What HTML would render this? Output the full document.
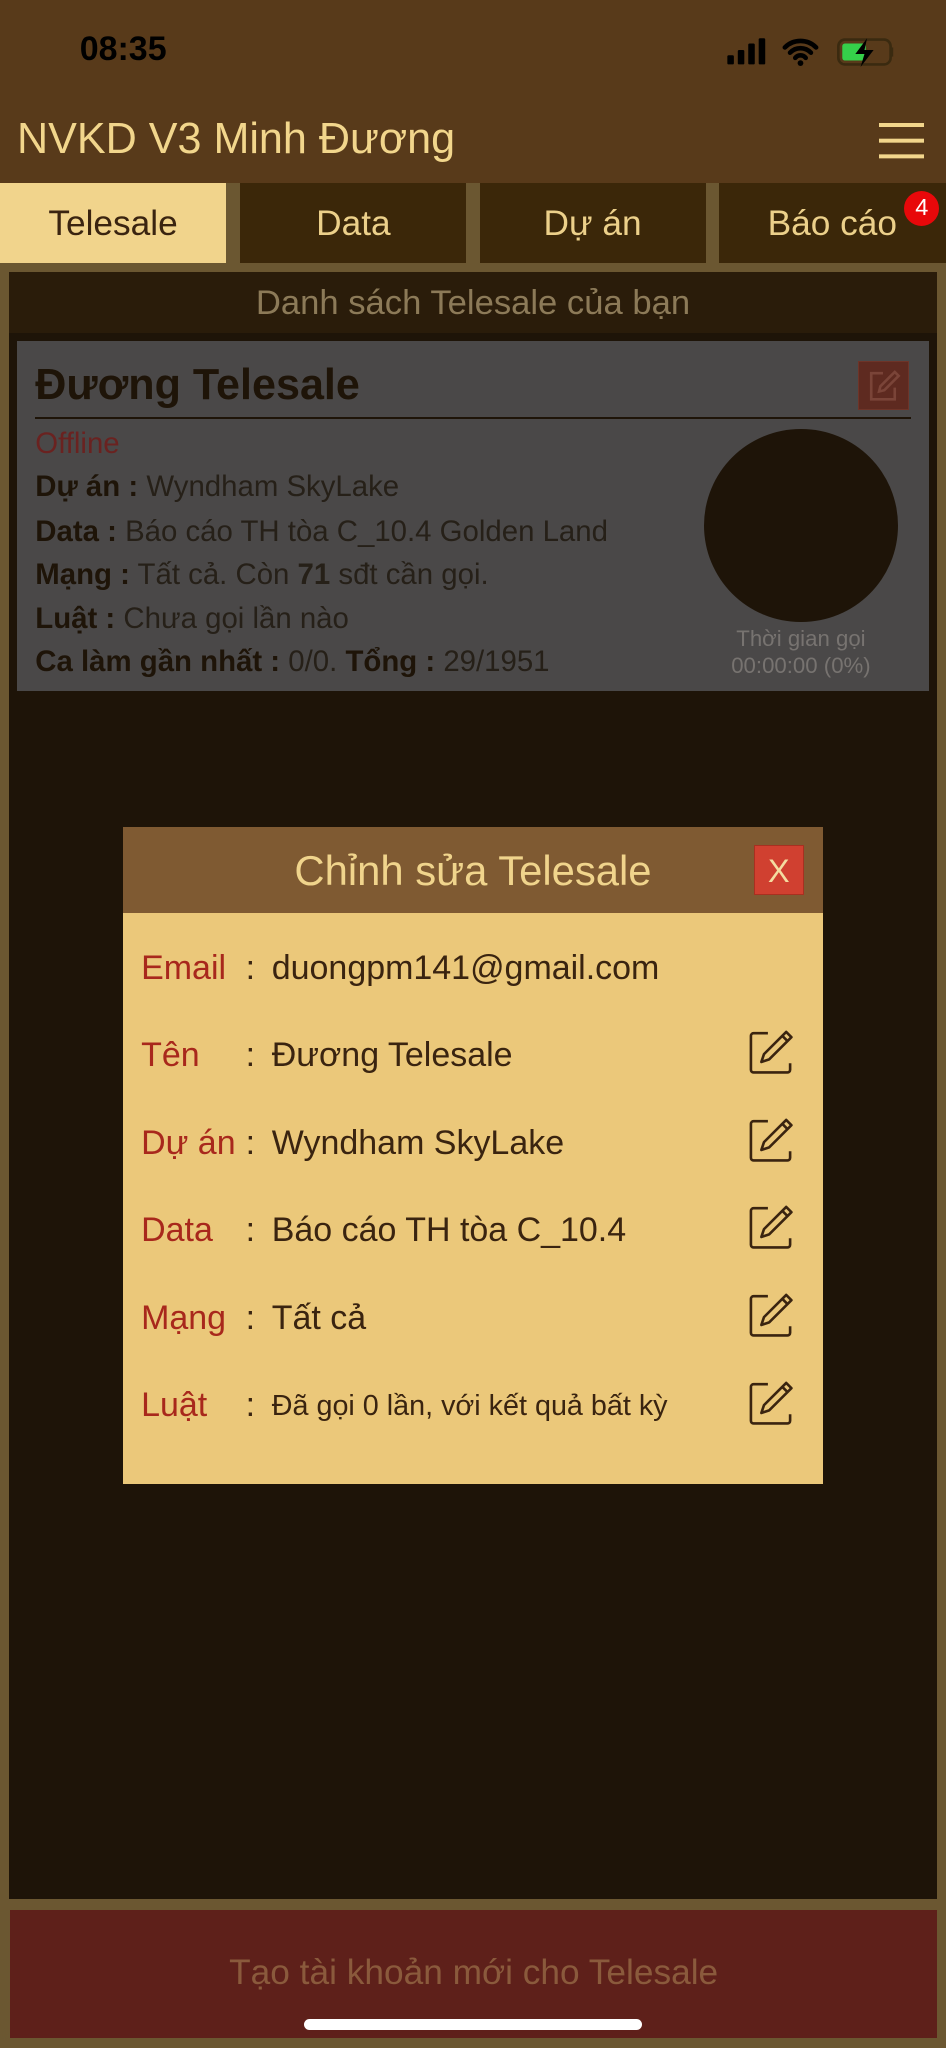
<!DOCTYPE html>
<html><head><meta charset="utf-8"><style>
*{margin:0;padding:0;box-sizing:border-box}
html,body{width:946px;height:2048px;overflow:hidden;background:#6b5731}
#w{zoom:1.30663;width:724px;height:1568px;position:relative;font-family:"Liberation Sans",sans-serif;background:#6b5731}
.a{position:absolute}
.tab{position:absolute;top:140px;height:61px;width:173px;background:#3b2709;color:#ecd08a;font-size:27px;text-align:center;line-height:62px}
.row{position:absolute;left:14px;font-size:26px;color:#3a2410;white-space:nowrap}
.row .l{position:absolute;left:0;color:#a8281c;white-space:nowrap}
.row .c{position:absolute;left:80px}
.row .v{position:absolute;left:100px;white-space:nowrap}
.ic{position:absolute;left:464px;top:-6px}
.ln{position:absolute;left:27px;font-size:22.5px;color:#1e1408;white-space:nowrap}
.ln b{font-weight:bold}
.ln span{color:#262018}
</style></head><body><div id="w">
<div class="a" style="left:0;top:0;width:724px;height:140px;background:#583a1a"></div>
<div class="a" style="left:61px;top:23px;font-size:26px;font-weight:bold;color:#000">08:35</div>
<svg class="a" style="left:556px;top:28px" width="130" height="24" viewBox="0 0 130 24">
<rect x="1" y="14" width="5" height="7" rx="1" fill="#000"/><rect x="9" y="10" width="5" height="11" rx="1" fill="#000"/><rect x="17" y="5" width="5" height="16" rx="1" fill="#000"/><rect x="25" y="1" width="5" height="20" rx="1" fill="#000"/>
<path d="M45 8a17 17 0 0 1 24 0M49 12a11 11 0 0 1 16 0M53 16a5 5 0 0 1 8 0" stroke="#000" stroke-width="3.5" fill="none" stroke-linecap="round"/><circle cx="57" cy="20" r="2.2" fill="#000"/>
<rect x="86" y="2" width="40" height="19" rx="5" fill="none" stroke="#3a2a10" stroke-width="2"/><rect x="89" y="5" width="18" height="13" rx="2" fill="#35d04a"/><path d="M127 8v7" stroke="#3a2a10" stroke-width="2"/><path d="M108 1l-9 12h7l-3 10 10-13h-7z" fill="#000"/>
</svg>
<div class="a" style="left:13px;top:88px;font-size:33px;color:#f2d68c">NVKD V3 Minh Đương</div>
<div class="a" style="left:673px;top:94px;width:34px;height:3px;background:#f2d68c;box-shadow:0 12px 0 #f2d68c,0 24px 0 #f2d68c"></div>
<div class="tab" style="left:0;background:#f1d48c;color:#3a2410">Telesale</div>
<div class="tab" style="left:184px">Data</div>
<div class="tab" style="left:367px">Dự án</div>
<div class="tab" style="left:550px;width:174px">Báo cáo</div>
<div class="a" style="left:692px;top:146px;width:27px;height:27px;border-radius:50%;background:#e8080a;color:#fff;font-size:18px;text-align:center;line-height:26px">4</div>
<div class="a" style="left:7px;top:208px;width:710px;height:1245px;background:#1e1408"></div>
<div class="a" style="left:7px;top:208px;width:710px;height:47px;background:#2a1c0a;color:#8c7a58;font-size:26.5px;text-align:center;line-height:48px">Danh sách Telesale của bạn</div>
<div class="a" style="left:13px;top:261px;width:698px;height:268px;background:#4a4848"></div>
<div class="a" style="left:27px;top:276px;font-size:33px;font-weight:bold;color:#1e1408">Đương Telesale</div>
<div class="a" style="left:657px;top:276px;width:39px;height:38px;background:#5e2a20;border:1px solid #6e3428"></div>
<svg class="a" style="left:663px;top:282px" width="28" height="28" viewBox="0 0 28 28" fill="none" stroke="#7a4438" stroke-width="2"><path d="M13 4H4v20h18v-9"/><path d="M22 3l3 3-11 11-4 1 1-4z"/></svg>
<div class="a" style="left:27px;top:319px;width:670px;height:2px;background:#1e1408"></div>
<div class="ln" style="top:327px;color:#6a2220">Offline</div>
<div class="ln" style="top:360px"><b>Dự án :</b> <span>Wyndham SkyLake</span></div>
<div class="ln" style="top:394px"><b>Data :</b> <span>Báo cáo TH tòa C_10.4 Golden Land</span></div>
<div class="ln" style="top:427px"><b>Mạng :</b> <span>Tất cả. Còn <b>71</b> sđt cần gọi.</span></div>
<div class="ln" style="top:461px"><b>Luật :</b> <span>Chưa gọi lần nào</span></div>
<div class="ln" style="top:494px"><b>Ca làm gần nhất :</b> <span>0/0.</span> <b>Tổng :</b> <span>29/1951</span></div>
<div class="a" style="left:539px;top:328px;width:148px;height:148px;border-radius:50%;background:#1e1408"></div>
<div class="a" style="left:533px;top:478px;width:160px;text-align:center;font-size:17px;color:#777370;line-height:21px">Thời gian gọi<br>00:00:00 (0%)</div>
<div class="a" style="left:94px;top:633px;width:536px;height:503px;background:#ebc87a"></div>
<div class="a" style="left:94px;top:633px;width:536px;height:66px;background:#7f5a32;color:#f0d48c;font-size:32px;text-align:center;line-height:68px">Chỉnh sửa Telesale</div>
<div class="a" style="left:577px;top:647px;width:38px;height:38px;background:#d04030;border:1px solid #a83020;color:#f4dca0;font-size:25px;text-align:center;line-height:38px">X</div>
<div class="a" style="left:94px;top:0;width:536px">
<div class="row" style="top:726px"><span class="l">Email</span><span class="c">:</span><span class="v">duongpm141@gmail.com</span></div>
<div class="row" style="top:793px"><span class="l">Tên</span><span class="c">:</span><span class="v">Đương Telesale</span><svg class="ic" width="36" height="36" viewBox="0 0 36 36" fill="none" stroke="#3a2410" stroke-width="2" stroke-linejoin="round"><path d="M16 4H5a2 2 0 0 0-2 2v26a2 2 0 0 0 2 2h26a2 2 0 0 0 2-2v-5"/><path d="M30 3l4 4-17 17-6 2 2-6z M27 6l4 4"/></svg></div>
<div class="row" style="top:860px"><span class="l">Dự án</span><span class="c">:</span><span class="v">Wyndham SkyLake</span><svg class="ic" width="36" height="36" viewBox="0 0 36 36" fill="none" stroke="#3a2410" stroke-width="2" stroke-linejoin="round"><path d="M16 4H5a2 2 0 0 0-2 2v26a2 2 0 0 0 2 2h26a2 2 0 0 0 2-2v-5"/><path d="M30 3l4 4-17 17-6 2 2-6z M27 6l4 4"/></svg></div>
<div class="row" style="top:927px"><span class="l">Data</span><span class="c">:</span><span class="v">Báo cáo TH tòa C_10.4</span><svg class="ic" width="36" height="36" viewBox="0 0 36 36" fill="none" stroke="#3a2410" stroke-width="2" stroke-linejoin="round"><path d="M16 4H5a2 2 0 0 0-2 2v26a2 2 0 0 0 2 2h26a2 2 0 0 0 2-2v-5"/><path d="M30 3l4 4-17 17-6 2 2-6z M27 6l4 4"/></svg></div>
<div class="row" style="top:994px"><span class="l">Mạng</span><span class="c">:</span><span class="v">Tất cả</span><svg class="ic" width="36" height="36" viewBox="0 0 36 36" fill="none" stroke="#3a2410" stroke-width="2" stroke-linejoin="round"><path d="M16 4H5a2 2 0 0 0-2 2v26a2 2 0 0 0 2 2h26a2 2 0 0 0 2-2v-5"/><path d="M30 3l4 4-17 17-6 2 2-6z M27 6l4 4"/></svg></div>
<div class="row" style="top:1061px"><span class="l">Luật</span><span class="c">:</span><span class="v" style="font-size:22px;top:3px">Đã gọi 0 lần, với kết quả bất kỳ</span><svg class="ic" width="36" height="36" viewBox="0 0 36 36" fill="none" stroke="#3a2410" stroke-width="2" stroke-linejoin="round"><path d="M16 4H5a2 2 0 0 0-2 2v26a2 2 0 0 0 2 2h26a2 2 0 0 0 2-2v-5"/><path d="M30 3l4 4-17 17-6 2 2-6z M27 6l4 4"/></svg></div>
</div>
<div class="a" style="left:8px;top:1462px;width:709px;height:98px;background:#5e201a;color:#8a5a3c;font-size:27px;text-align:center;line-height:96px">Tạo tài khoản mới cho Telesale</div>
<div class="a" style="left:233px;top:1545px;width:258px;height:9px;border-radius:5px;background:#fff"></div>
</div></body></html>
